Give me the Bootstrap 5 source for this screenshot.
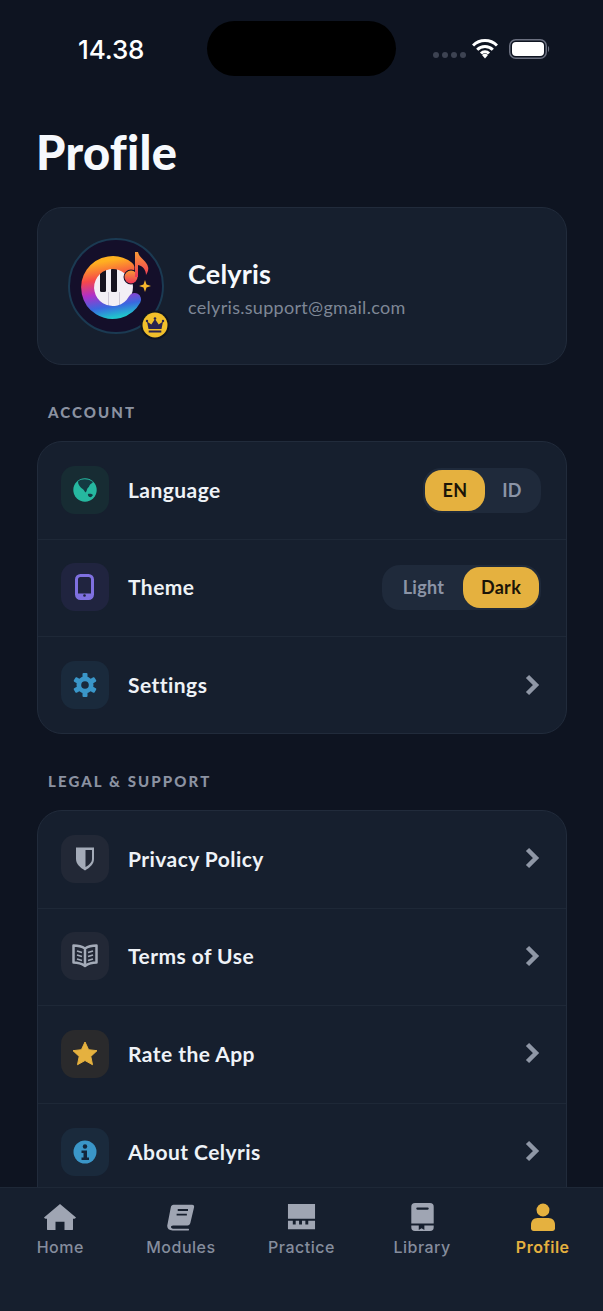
<!DOCTYPE html>
<html lang="en"><head><meta charset="utf-8"><title>Profile</title>
<link href="https://cdn.jsdelivr.net/npm/bootstrap@5.3.0/dist/css/bootstrap.min.css" rel="stylesheet">
<style>
html,body{margin:0;background:#0e1421;}
.phone{position:relative;width:603px;height:1311px;overflow:hidden;background:#0e1421;font-family:"Lato","Noto Sans",sans-serif;color:#f4f7fb;}
.statusline{height:76px;padding-top:21px;}
.clock{position:absolute;left:78px;top:34px;font:500 26px/32px Inter,sans-serif;color:#fff;letter-spacing:-.1px;}
.island{width:189px;height:55px;margin-left:207px;background:#000;border-radius:28px;}
.sigdots{position:absolute;left:433px;top:52px;display:flex;gap:3px;}
.sigdots i{display:block;width:6px;height:6px;border-radius:50%;background:#3d4352;}
.wifi{position:absolute;left:472px;top:38px;}
.batt{position:absolute;left:509px;top:39px;}
.pagehead{margin:39px 0 0 36px;font-size:47px;line-height:74px;font-weight:900;color:#f6f9fd;letter-spacing:.3px;}
.content{padding:0 36.5px;}
.surface{background:#161f2e;border:1px solid #212b3b;border-radius:25px;}
.who{height:158px;margin-top:18px;padding-left:30.5px;gap:24px;}
.avatar{position:relative;width:96px;height:96px;flex:none;}
.crown{position:absolute;left:72px;top:72px;width:30px;height:30px;}
.whotext{padding-top:4px;}
.uname{font-size:27px;font-weight:700;line-height:32px;color:#f6f9fd;letter-spacing:.2px;}
.umail{font-size:18px;line-height:24px;color:#7e8796;margin-top:5px;letter-spacing:.3px;}
.seclabel{margin:38px 0 0 11.5px;height:18px;font-size:15px;line-height:18px;font-weight:900;letter-spacing:2.1px;color:#8b92a1;}
.grp{margin-top:20px;height:293px;overflow:hidden;}
.grp2{height:460px;}
.rowitem{height:97.5px;padding:0 24.5px 0 23.5px;border-bottom:1px solid #1e2837;}
.rowitem:last-child{border-bottom:0;}
.tile{width:48px;height:48px;border-radius:14px;flex:none;margin-bottom:1px;}
.tealt{background:#172c33;}.purt{background:#20243f;}.blut{background:#1a2a3c;}.gryt{background:#222836;}.goldt{background:#2a2a2c;}
.rowtext{margin:0 0 2px 19px;font-size:21px;font-weight:700;color:#eef2f7;letter-spacing:.45px;}
.seg{background:#1f2a3b;border-radius:18px;height:45px;padding:2px;}
.seg span{display:flex;align-items:center;justify-content:center;height:41px;font-size:18px;font-weight:700;color:#8b94a6;border-radius:17px;letter-spacing:.3px;}
.seg span.on{background:#e5b13f;color:#1b1408;}
.chev{margin:0 1px 2px 0;}
.tabbar{position:absolute;left:0;right:0;bottom:0;height:124px;background:#161f2e;border-top:1px solid #1e2837;}
.tabcell{width:20%;padding-top:15px;text-align:center;}
.tabcell svg{display:block;margin:0 auto;height:28px;}
.tabname{font:500 16px/20px Inter,sans-serif;color:#858d9d;letter-spacing:.5px;margin-top:6px;}
.tabon{color:#e5b13f;font-weight:600;}
</style></head><body>
<div class="phone">
  <div class="statusline"><div class="island"></div></div>
  <div class="clock">14.38</div>
  <div class="sigdots"><i></i><i></i><i></i><i></i></div>
  <svg class="wifi" width="26" height="21" viewBox="0 0 26 21"><path d="M1 7.5a17 17 0 0 1 24 0M5.200 11.700a11 11 0 0 1 15.600 0M9 15.500a5.500 5.500 0 0 1 8 0" fill="none" stroke="#fff" stroke-width="3"/><path d="M13 20.500l-3-3.500a4.500 4.500 0 0 1 6 0z" fill="#fff"/></svg>
  <svg class="batt" width="42" height="20" viewBox="0 0 42 20"><rect x=".75" y=".75" width="36.500" height="18.500" rx="6" fill="none" stroke="#6b7080" stroke-width="1.500"/><rect x="3" y="3" width="32" height="14" rx="4" fill="#fff"/><path d="M39 7c1.500.5 1.500 5.500 0 6z" fill="#6b7080"/></svg>

  <div class="pagehead">Profile</div>
  <div class="content">
    <div class="surface who d-flex align-items-center">
      <div class="avatar">
        <svg width="96" height="96" viewBox="0 0 96 96">
          <defs><linearGradient id="cg" gradientUnits="userSpaceOnUse" x1="55" y1="20" x2="65" y2="76"><stop offset="0" stop-color="#ffb020"/><stop offset=".3" stop-color="#f5484a"/><stop offset=".55" stop-color="#b030c8"/><stop offset=".8" stop-color="#3a68e0"/><stop offset="1" stop-color="#20c4cc"/></linearGradient>
          <linearGradient id="ng" x1="0" y1="0" x2="0" y2="1"><stop offset="0" stop-color="#f99a35"/><stop offset="1" stop-color="#ee3558"/></linearGradient></defs>
          <circle cx="48" cy="48" r="47" fill="#140f2a" stroke="#1b3a52" stroke-width="2"/>
          <circle cx="45" cy="49" r="20" fill="#f3eff5"/>
          <rect x="32" y="30" width="6" height="24" rx="1.500" fill="#17131f"/><rect x="43" y="30" width="6" height="24" rx="1.500" fill="#17131f"/>
          <path d="M40.500 54v16M51.500 54v16" stroke="#cfc9d6" stroke-width="1"/>
          <path d="M60 29.800A25 25 0 1 0 66.600 61.500" fill="none" stroke="url(#cg)" stroke-width="13" stroke-linecap="round"/>
          <circle cx="63" cy="39" r="6.500" fill="#140f2a" stroke="#140f2a" stroke-width="2"/>
          <circle cx="63" cy="39" r="6.500" fill="url(#ng)"/>
          <path d="M67 39V14h3c1 6 9 9 10 15 1 3-1 6-2 8 0-5-3-9-8-10v12z" fill="url(#ng)"/>
          <path d="M77 42l1.500 4.500 4.500 1.500-4.500 1.500-1.500 4.500-1.500-4.500-4.500-1.500 4.500-1.500z" fill="#f6b62c"/>
        </svg>
        <svg class="crown" viewBox="0 0 30 30"><circle cx="15" cy="15" r="14.500" fill="#0f1420"/><circle cx="15" cy="15" r="12.500" fill="#f1bf2b"/><path d="M8.500 19L7 11.500l4.300 3L15 9l3.700 5.500 4.300-3L21.500 19zM8.700 20.500h12.600v2H8.700z" fill="#2a2350"/><circle cx="15" cy="8.500" r="1.300" fill="#2a2350"/><circle cx="7" cy="11" r="1.200" fill="#2a2350"/><circle cx="23" cy="11" r="1.200" fill="#2a2350"/></svg>
      </div>
      <div class="whotext">
        <div class="uname">Celyris</div>
        <div class="umail">celyris.support@gmail.com</div>
      </div>
    </div>

    <div class="seclabel">ACCOUNT</div>
    <div class="surface grp">
      <div class="rowitem d-flex align-items-center">
        <div class="tile tealt d-flex align-items-center justify-content-center"><svg width="24" height="24" viewBox="0 0 24 24"><circle cx="12" cy="12" r="11.700" fill="#26b8a0"/><path d="M5 3.500C8 1 14 0 20 4c-1 2-3 1.500-3.500 3.500-.5 2-2 2-2.500 4-.3 1.500-1 2.500-1.500 3-1-1.500-2-3-3.500-4C7 9 5 6.500 5 3.500zM15 16c2-.5 4 0 5 1-.8 1.500-2 2.500-3.500 2-1-.3-2-2-1.500-3z" fill="#143a42"/></svg></div>
        <div class="rowtext">Language</div>
        <div class="seg d-flex ms-auto"><span class="on" style="width:60px">EN</span><span style="width:54px">ID</span></div>
      </div>
      <div class="rowitem d-flex align-items-center">
        <div class="tile purt d-flex align-items-center justify-content-center"><svg width="20" height="26" viewBox="0 0 20 26"><rect x="1.500" y="1.500" width="16" height="23" rx="4" fill="none" stroke="#7f70e0" stroke-width="3"/><path d="M1.500 19.500h16v1a4 4 0 0 1-4 4h-8a4 4 0 0 1-4-4z" fill="#7f70e0"/><circle cx="9.500" cy="21.500" r="1.300" fill="#20243f"/></svg></div>
        <div class="rowtext">Theme</div>
        <div class="seg d-flex ms-auto"><span style="width:79px">Light</span><span class="on" style="width:76px">Dark</span></div>
      </div>
      <div class="rowitem d-flex align-items-center">
        <div class="tile blut d-flex align-items-center justify-content-center"><svg width="24" height="24" viewBox="0 0 24 24"><g fill="#3a96c8"><circle cx="12" cy="12" r="8.500"/><rect x="9.500" y="0" width="5" height="5" rx="1"/><rect x="9.500" y="19" width="5" height="5" rx="1"/><rect x="9.500" y="0" width="5" height="5" rx="1" transform="rotate(60 12 12)"/><rect x="9.500" y="19" width="5" height="5" rx="1" transform="rotate(60 12 12)"/><rect x="9.500" y="0" width="5" height="5" rx="1" transform="rotate(120 12 12)"/><rect x="9.500" y="19" width="5" height="5" rx="1" transform="rotate(120 12 12)"/></g><circle cx="12" cy="12" r="3.800" fill="#1a2a3c"/></svg></div>
        <div class="rowtext">Settings</div>
        <svg class="chev ms-auto" width="16" height="22" viewBox="0 0 16 22"><path d="M3.500 2.500L12 11l-8.500 8.500" fill="none" stroke="#8f97a6" stroke-width="4.500"/></svg>
      </div>
    </div>

    <div class="seclabel">LEGAL &amp; SUPPORT</div>
    <div class="surface grp grp2">
      <div class="rowitem d-flex align-items-center">
        <div class="tile gryt d-flex align-items-center justify-content-center"><svg width="20" height="24" viewBox="0 0 20 24"><path d="M1 .5h18V12c0 5-4 8.500-9 11.500C5 20.500 1 17 1 12z" fill="#a4abb8"/><path d="M10.500 3H17v9c0 3.500-3 6-6.500 8z" fill="#222836"/></svg></div>
        <div class="rowtext">Privacy Policy</div>
        <svg class="chev ms-auto" width="16" height="22" viewBox="0 0 16 22"><path d="M3.500 2.500L12 11l-8.500 8.500" fill="none" stroke="#8f97a6" stroke-width="4.500"/></svg>
      </div>
      <div class="rowitem d-flex align-items-center">
        <div class="tile gryt d-flex align-items-center justify-content-center"><svg width="26" height="24" viewBox="0 0 26 24"><path d="M13 4.500C10 2.500 5 1.500 1.500 1.500v17c4 0 8 1 11.500 3.500 3.500-2.500 7.500-3.500 11.500-3.500v-17C21 1.500 16 2.500 13 4.500zM13 4.500V22" fill="none" stroke="#a4abb8" stroke-width="2.500" stroke-linejoin="round"/><path d="M5 7l5 1.500M5 11l5 1.500M5 15l5 1.500M21 7l-5 1.500M21 11l-5 1.500M21 15l-5 1.500" stroke="#a4abb8" stroke-width="1.800"/></svg></div>
        <div class="rowtext">Terms of Use</div>
        <svg class="chev ms-auto" width="16" height="22" viewBox="0 0 16 22"><path d="M3.500 2.500L12 11l-8.500 8.500" fill="none" stroke="#8f97a6" stroke-width="4.500"/></svg>
      </div>
      <div class="rowitem d-flex align-items-center">
        <div class="tile goldt d-flex align-items-center justify-content-center"><svg width="26" height="25" viewBox="0 0 26 25"><path d="M13 1l3.600 7.700 8.400 1-6.200 5.700 1.700 8.300L13 19.500l-7.500 4.200 1.700-8.300L1 9.700l8.400-1z" fill="#e5b13f" stroke="#e5b13f" stroke-linejoin="round"/></svg></div>
        <div class="rowtext">Rate the App</div>
        <svg class="chev ms-auto" width="16" height="22" viewBox="0 0 16 22"><path d="M3.500 2.500L12 11l-8.500 8.500" fill="none" stroke="#8f97a6" stroke-width="4.500"/></svg>
      </div>
      <div class="rowitem d-flex align-items-center">
        <div class="tile blut d-flex align-items-center justify-content-center"><svg width="24" height="24" viewBox="0 0 24 24"><circle cx="12" cy="12" r="11.500" fill="#3a96c8"/><circle cx="12" cy="6.500" r="2.200" fill="#13263c"/><path d="M8.500 10.500h5.500v7h2v2.500H8.500v-2.500h2v-4.500h-2z" fill="#13263c"/></svg></div>
        <div class="rowtext">About Celyris</div>
        <svg class="chev ms-auto" width="16" height="22" viewBox="0 0 16 22"><path d="M3.500 2.500L12 11l-8.500 8.500" fill="none" stroke="#8f97a6" stroke-width="4.500"/></svg>
      </div>
    </div>
  </div>

  <nav class="tabbar d-flex">
    <div class="tabcell"><svg width="32" height="28" viewBox="0 0 32 30" preserveAspectRatio="none"><path d="M16 1L32 15.500c-.3 1-1.500 1.500-2.500 1.500H29v11a1 1 0 0 1-1 1h-7.500v-9h-9v9H4a1 1 0 0 1-1-1V17h-.5C1.500 17 .3 16.500 0 15.500z" fill="#9fa5b3"/></svg><div class="tabname">Home</div></div>
    <div class="tabcell"><svg width="28" height="28" viewBox="0 0 30 30"><path d="M7 2h20c1.500 0 2.300 1 2 2.500l-4 17c-.4 1.500-1.500 2.500-3 2.500H6.500c-3 0-3 3.500 0 3.500H23c.8 0 .8 2 0 2H6C1.500 29.500-.500 26.500.500 23L4 5c.4-2 1.500-3 3-3z" fill="#9fa5b3"/><path d="M11.500 7.500h11M10.300 12.500h11" stroke="#161f2e" stroke-width="2"/></svg><div class="tabname">Modules</div></div>
    <div class="tabcell"><svg width="29" height="28" viewBox="0 0 30 30" preserveAspectRatio="none"><path d="M1 1h28v16H1zM1 19h5v4h3v-4h3.500v4h3v-4H19v4h3v-4h7v9H1z" fill="#9fa5b3"/></svg><div class="tabname">Practice</div></div>
    <div class="tabcell"><svg width="23" height="29" viewBox="0 0 24 30"><path d="M4 0h16a4 4 0 0 1 4 4v18H0V4a4 4 0 0 1 4-4zM0 24h8v5l3-2 3 2v-5h10v2a4 4 0 0 1-4 4H4a4 4 0 0 1-4-4z" fill="#9fa5b3"/><path d="M6.500 6h11" stroke="#161f2e" stroke-width="2.400" stroke-linecap="round"/></svg><div class="tabname">Library</div></div>
    <div class="tabcell"><svg width="24" height="28" viewBox="0 0 26 30" preserveAspectRatio="none"><circle cx="13" cy="7.500" r="7" fill="#e5b13f"/><path d="M7 16h12c4 0 7 3 7 7v4c0 1.500-1 3-3 3H3c-2 0-3-1.500-3-3v-4c0-4 3-7 7-7z" fill="#e5b13f"/></svg><div class="tabname tabon">Profile</div></div>
  </nav>
</div>
<script src="https://cdn.jsdelivr.net/npm/bootstrap@5.3.0/dist/js/bootstrap.bundle.min.js"></script>
</body></html>
